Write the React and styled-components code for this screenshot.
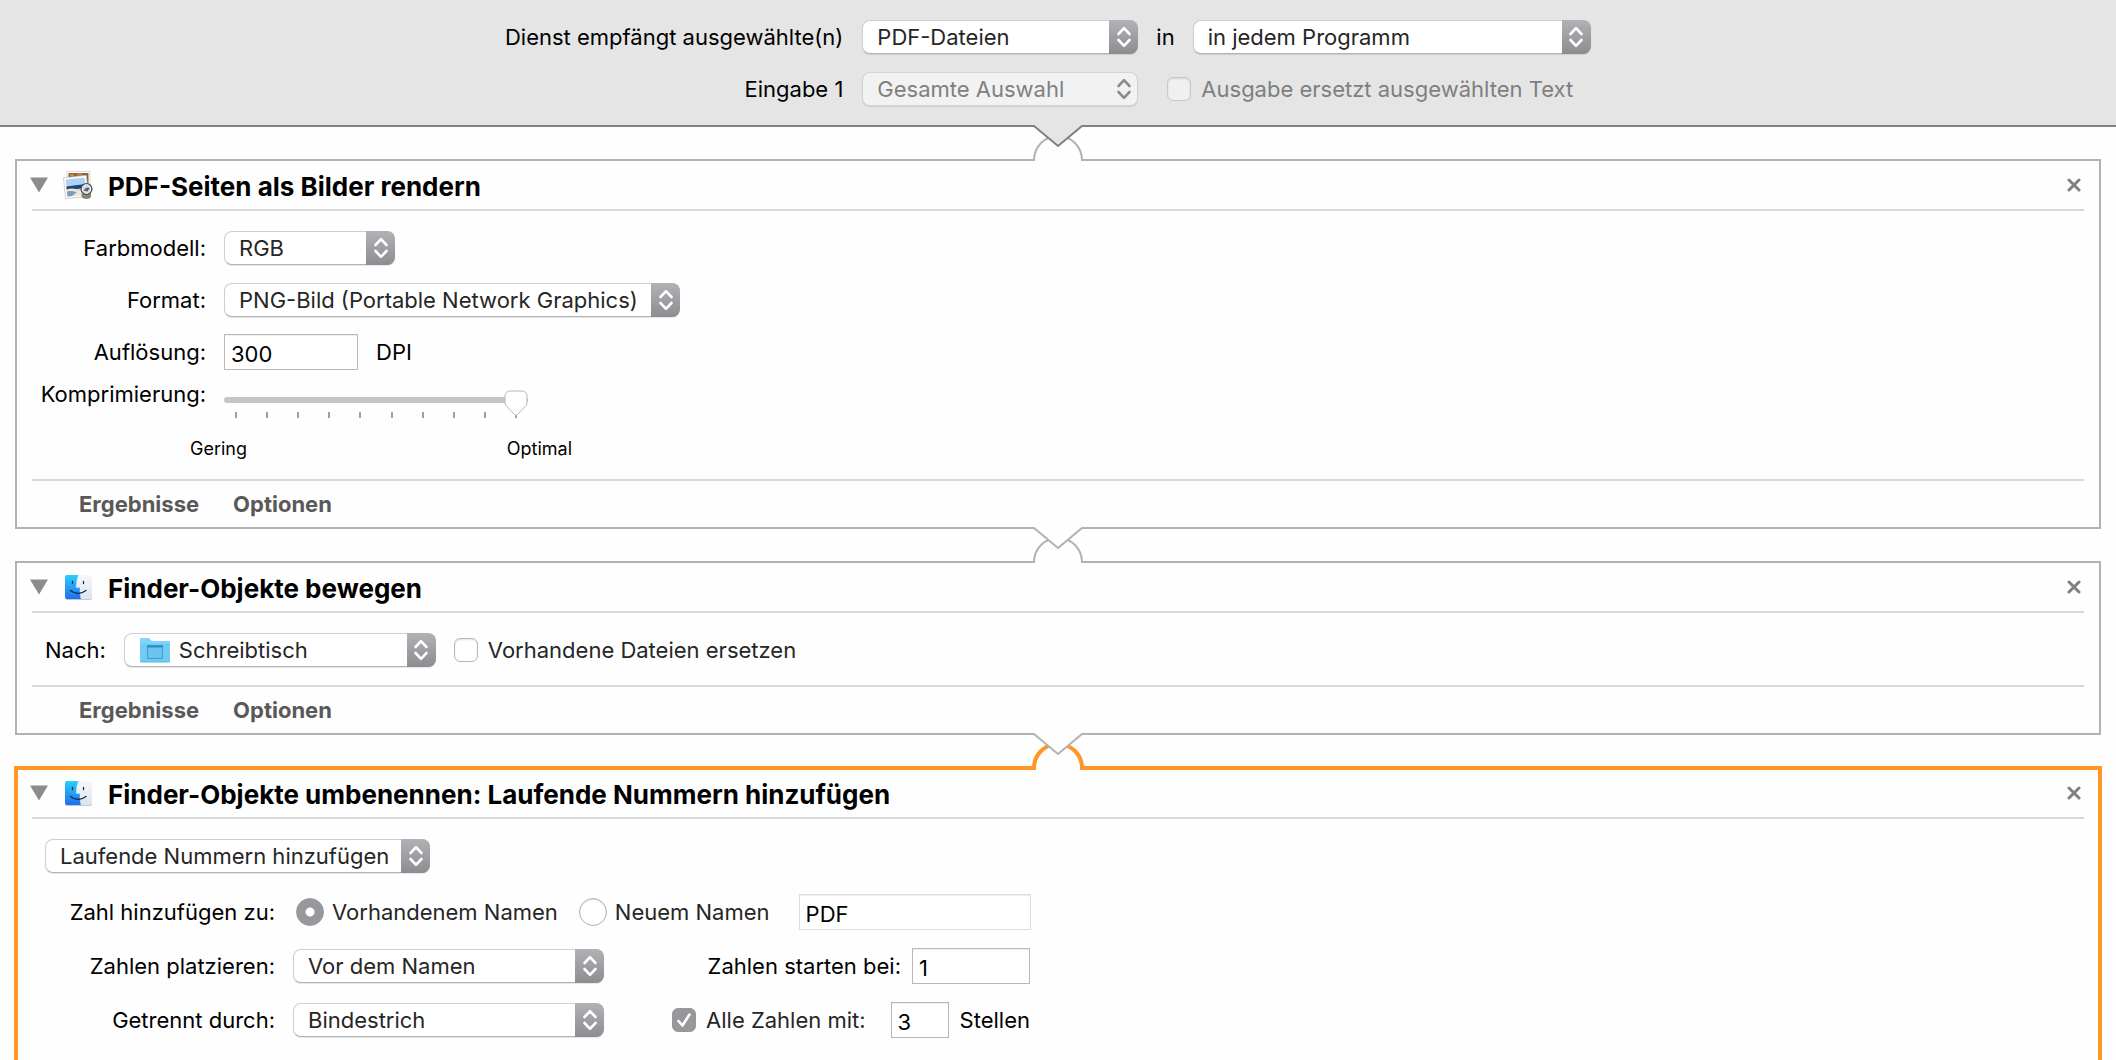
import React, { useId, useState } from "react";
import styled, { createGlobalStyle } from "styled-components";

const GlobalStyle = createGlobalStyle`
  *, *::before, *::after { box-sizing: border-box; }
  body {
    margin: 0;
    background: #fefefe;
    color: #000;
    font: 22px/26px Inter, "Liberation Sans", sans-serif;
  }
  button, input, select { font: inherit; color: inherit; margin: 0; }
`;

const Window = styled.div`
  display: flex;
  flex-direction: column;
  height: 100vh;
  overflow: hidden auto;
  scrollbar-width: none;
  > * { flex-shrink: 0; }
`;

const ServiceBar = styled.header`
  display: grid;
  grid-template-columns: 344px auto auto;
  justify-content: center;
  row-gap: 18px;
  padding: 20px 22px 19px 0;
  background: #e5e5e5;
  border-bottom: 2px solid #808080;
`;

const ServiceLabel = styled.label`
  align-self: center;
  text-align: right;
  padding-right: 4px;
`;

const ServiceCell = styled.div`
  display: flex;
  align-items: center;
  gap: 18px;
  padding-left: ${(p) => p.$indent}px;
`;

const PopupFrame = styled.div`
  display: grid;
  grid-template-columns: 1fr 29px;
  width: ${(p) => p.$width}px;
  height: 34px;
  flex-shrink: 0;
`;

const PopupSelect = styled.select`
  grid-area: 1 / 1 / 2 / 3;
  appearance: none;
  width: 100%;
  height: 34px;
  padding: 0 32px 0 ${(p) => (p.$icon ? 54 : 14)}px;
  border: 1px solid #cfcfcf;
  border-bottom-color: #b2b2b2;
  border-radius: 8px;
  background: #fff;
  color: #262626;
  box-shadow: 0 1px 1px rgba(0, 0, 0, 0.1);
  &:disabled {
    background: #f2f2f2;
    border-color: #d2d2d2;
    color: #808080;
    opacity: 1;
  }
`;

const PopupArrows = styled.span`
  grid-area: 1 / 2;
  z-index: 1;
  display: grid;
  place-items: center;
  pointer-events: none;
  border-radius: 0 8px 8px 0;
  color: ${(p) => (p.$off ? "#8c8c8c" : "#fff")};
  background: ${(p) => (p.$off ? "none" : "linear-gradient(#b2b1b5, #8d8c91)")};
`;

const PopupIcon = styled.span`
  grid-area: 1 / 1;
  z-index: 1;
  align-self: center;
  display: flex;
  padding-left: 15px;
  pointer-events: none;
`;

const Action = styled.section`
  margin: 0 15px;
  background: #fefefe;
  border: 2px solid ${(p) => (p.$selected ? "#ff9628" : "#b2b2b2")};
  box-shadow: ${(p) => (p.$selected ? "0 0 0 1px #ff9628, inset 0 0 0 1px #ff9628" : "none")};
`;

const ActionHeader = styled.div`
  display: flex;
  align-items: center;
  height: 48px;
  padding: 0 18px 0 13px;
`;

const PlainButton = styled.button`
  display: flex;
  padding: 0;
  border: 0;
  background: none;
`;

const ActionIcon = styled.span`
  display: flex;
  padding: 0 15px;
`;

const ActionTitle = styled.h2`
  flex: 1;
  margin: 0;
  padding-top: 3px;
  font-size: 26px;
  line-height: 32px;
  font-weight: 700;
`;

const Divider = styled.hr`
  height: 2px;
  margin: 0 15px;
  border: 0;
  background: #d8d8d8;
`;

const ActionBody = styled.div`
  padding: 20px 0 ${(p) => p.$bottom}px;
`;

const ActionFooter = styled.div`
  display: flex;
  align-items: center;
  gap: 34px;
  height: 46px;
  padding-left: 62px;
`;

const FooterButton = styled(PlainButton)`
  color: #595959;
  font-weight: 700;
`;

const Rows = styled.div`
  display: flex;
  flex-direction: column;
  gap: ${(p) => p.$gap}px;
`;

const NumberRows = styled(Rows)`
  padding-top: 22px;
`;

const Row = styled.div`
  display: flex;
  align-items: center;
  gap: ${(p) => p.$gap || 18}px;
  height: 34px;
  padding-left: ${(p) => p.$indent || 0}px;
`;

const Field = styled.label`
  width: ${(p) => p.$width}px;
  flex-shrink: 0;
  text-align: right;
`;

const TextInput = styled.input`
  width: ${(p) => p.$width}px;
  height: 36px;
  flex-shrink: 0;
  padding: 3px 6px 0;
  border: 1px solid ${(p) => (p.$soft ? "#dcdcdc" : "#b8b8b8")};
  border-radius: 0;
  background: #fff;
  box-shadow: inset 0 1px 0 #f0f0f0;
  outline: 0;
`;

const NameInput = styled(TextInput)`
  margin-left: 8px;
`;

const Choice = styled.label`
  display: flex;
  align-items: center;
  gap: ${(p) => p.$gap || 10}px;
  color: ${(p) => (p.$off ? "#7f7f7f" : "#262626")};
`;

const CheckFrame = styled.span`
  display: grid;
  width: 24px;
  height: 24px;
  > * { grid-area: 1 / 1; }
  > svg { z-index: 1; pointer-events: none; }
`;

const CheckInput = styled.input`
  appearance: none;
  width: 24px;
  height: 24px;
  border: 1px solid #b8b8b8;
  border-radius: 6px;
  background: #fff;
  box-shadow: inset 0 1px 2px rgba(0, 0, 0, 0.12);
  &:checked { background: #98979c; border-color: #98979c; box-shadow: none; }
  &:disabled { background: #f0f0f0; border-color: #c8c8c8; }
`;

const RadioInput = styled.input`
  appearance: none;
  width: 28px;
  height: 28px;
  border: 1px solid #b0b0b0;
  border-radius: 50%;
  background: #fff;
  box-shadow: inset 0 1px 2px rgba(0, 0, 0, 0.12);
  &:checked {
    border-color: #98979c;
    background: radial-gradient(circle, #fff 0 4px, #98979c 5px);
    box-shadow: none;
  }
`;

const SliderRow = styled.div`
  display: flex;
  align-items: flex-start;
  gap: 18px;
  padding-top: 12px;
`;

const SliderBox = styled.div`
  width: 304px;
  padding-top: 7px;
`;

const thumb = encodeURIComponent(
  '<svg xmlns="http://www.w3.org/2000/svg" width="24" height="26"><path d="M1 6a5 5 0 0 1 5-5h12a5 5 0 0 1 5 5v6q0 2-1 3.500L13.500 24.500q-1.500 1.500-3 0L2 15.500q-1-1.500-1-3.500z" fill="#fff" stroke="#b8b8b8"/></svg>'
);

const Slider = styled.input`
  appearance: none;
  position: relative;
  z-index: 1;
  display: block;
  width: 100%;
  height: 24px;
  background: none;
  &::-webkit-slider-runnable-track {
    height: 6px;
    border-radius: 3px;
    background: #c6c6c6;
  }
  &::-webkit-slider-thumb {
    appearance: none;
    width: 24px;
    height: 26px;
    margin-top: -7px;
    background: url("data:image/svg+xml,${thumb}") no-repeat;
  }
`;

const Ticks = styled.div`
  display: flex;
  justify-content: space-between;
  margin: 0 11px;
`;

const Tick = styled.span`
  width: 2px;
  height: 6px;
  background: #a0a0a0;
`;

const ScaleCaptions = styled.div`
  display: flex;
  justify-content: space-between;
  width: 382px;
  margin: 20px 0 0 173px;
  font-size: 18px;
  line-height: 22px;
`;

const RightPart = styled.div`
  display: flex;
  align-items: center;
  justify-content: flex-end;
  gap: 11px;
  width: 408px;
`;

const DigitsCaption = styled.span`
  padding-right: 14px;
`;

const ConnectorSvg = styled.svg`
  position: relative;
  z-index: 2;
  display: block;
  margin: -3px auto;
`;

function Connector({ fill = "#fefefe", line = "#b2b2b2", selected }) {
  return (
    <ConnectorSvg width="64" height="38" viewBox="0 0 64 38" fill="none" aria-hidden="true">
      <path
        d={selected ? "M8 38V36A24 24 0 0 1 56 36V38" : "M8 37V36A24 24 0 0 1 56 36V37"}
        fill="#fefefe"
        stroke={selected ? "#ff9628" : "#b2b2b2"}
        strokeWidth={selected ? 4 : 2}
      />
      <path d="M8 1V2L32 22L56 2V1Z" fill={fill} />
      <path d="M7 2H8L32 22L56 2H57" stroke={line} strokeWidth="2" />
    </ConnectorSvg>
  );
}

function Popup({ id, width, value, disabled, icon, label }) {
  return (
    <PopupFrame $width={width}>
      <PopupSelect id={id} disabled={disabled} $icon={!!icon} aria-label={label} defaultValue={value}>
        <option>{value}</option>
      </PopupSelect>
      {icon && <PopupIcon>{icon}</PopupIcon>}
      <PopupArrows $off={disabled}>
        <svg width="16" height="24" viewBox="0 0 16 24" fill="none" stroke="currentColor" strokeWidth="2.6" strokeLinecap="round" strokeLinejoin="round">
          <path d="M2.500 9L8 3.200L13.500 9M2.500 15L8 20.800L13.500 15" />
        </svg>
      </PopupArrows>
    </PopupFrame>
  );
}

function Checkbox({ children, checked, disabled, gap }) {
  const [on, setOn] = useState(!!checked);
  return (
    <Choice $off={disabled} $gap={gap}>
      <CheckFrame>
        <CheckInput type="checkbox" checked={on} disabled={disabled} onChange={(e) => setOn(e.target.checked)} />
        {on && (
          <svg width="24" height="24" viewBox="0 0 24 24" fill="none" stroke="#fff" strokeWidth="2.6" strokeLinecap="round" strokeLinejoin="round">
            <path d="M6.500 13L10.500 17.500L17.500 6.500" />
          </svg>
        )}
      </CheckFrame>
      {children}
    </Choice>
  );
}

function FinderIcon() {
  const id = useId();
  return (
    <svg width="30" height="30" viewBox="0 0 30 30" aria-hidden="true">
      <defs>
        <linearGradient id={id + "b"} x1="0" y1="0" x2="0" y2="1">
          <stop offset="0" stopColor="#2ad0fb" />
          <stop offset="1" stopColor="#1f6ff0" />
        </linearGradient>
        <linearGradient id={id + "w"} x1="0" y1="0" x2="0" y2="1">
          <stop offset="0" stopColor="#f6f6f8" />
          <stop offset="1" stopColor="#dbe6f1" />
        </linearGradient>
      </defs>
      <rect x="2" y="4" width="27" height="24" rx="2" fill="#c4c8cd" />
      <rect x="2" y="3" width="27" height="24" rx="2" fill={`url(#${id}w)`} />
      <path d="M4 3H15.500Q13.200 9 13.200 15.500H17Q16.600 21 18 27H4Q2 27 2 25V5Q2 3 4 3Z" fill={`url(#${id}b)`} />
      <path d="M15.500 3Q13.200 9 13.200 15.500H17Q16.600 21 18 27" fill="none" stroke="#fff" strokeWidth=".6" opacity=".6" />
      <path d="M9.500 9.500V11.500M20.500 9.500V11.500" stroke="#1b2c46" strokeWidth="1.300" strokeLinecap="round" />
      <path d="M7.500 18.500Q15 24.500 23 18.500" fill="none" stroke="#1b2c46" strokeWidth="1.300" strokeLinecap="round" />
    </svg>
  );
}

function PreviewIcon() {
  return (
    <svg width="30" height="30" viewBox="0 0 30 30" aria-hidden="true">
      <rect x="4" y="1.500" width="23" height="20" fill="#fff" stroke="#c4c4c4" strokeWidth=".6" />
      <rect x="5.500" y="3" width="20" height="12" fill="#8d6230" />
      <path d="M7 4h4v2H7zM14 3.500h5v2h-5z" fill="#b98a4c" />
      <g transform="rotate(-6 13 17)">
        <rect x="1.500" y="6.500" width="23" height="21" fill="#fff" stroke="#b4b4b4" strokeWidth=".6" />
        <rect x="3.500" y="8.500" width="19" height="17" fill="#b0d2f6" />
        <path d="M3.500 15.500L22.500 15V19H3.500Z" fill="#1d4577" />
        <path d="M3.500 18.500Q9 17 14 19.500T22.500 19.500V25.500H3.500Z" fill="#ece5d8" />
        <path d="M3.500 20.500Q9 20 13 22.500L8 25.500H3.500Z" fill="#7d9cbb" />
      </g>
      <path d="M18.500 23.500H28V27Q27 29 23.500 29T18.500 27Z" fill="#8b8378" />
      <circle cx="23.500" cy="19" r="5.400" fill="#cfdae6" stroke="#4c4a49" strokeWidth="1.300" />
      <circle cx="23.500" cy="19" r="4.200" fill="none" stroke="#f5f5f5" />
      <path d="M20.500 20.500Q23.500 16 26.500 18L24.500 21.500Z" fill="#55606c" />
    </svg>
  );
}

function FolderIcon() {
  return (
    <svg width="32" height="28" viewBox="0 0 32 28" aria-hidden="true">
      <path d="M1 3.500Q1 2 2.500 2H9.500L12.500 5H29.500Q31 5 31 6.500V25Q31 26.500 29.500 26.500H2.500Q1 26.500 1 25Z" fill="#58b7e6" />
      <path d="M1 3.500Q1 2 2.500 2H9.500L12.500 5H29.500Q31 5 31 6.500V8H1Z" fill="#7fd4f8" />
      <rect x="1" y="7.500" width="30" height="18" rx="1" fill="#70cbf5" />
      <rect x="8.500" y="9.500" width="15" height="13" fill="#6cc3ee" stroke="#3f9fd0" />
      <path d="M8 10.500H24" stroke="#2f8dbf" strokeWidth="2" />
    </svg>
  );
}

function ActionFrame({ title, icon, selected, children, footer }) {
  return (
    <Action $selected={selected}>
      <ActionHeader>
        <PlainButton aria-label="Einklappen">
          <svg width="18" height="16" viewBox="0 0 18 16"><path d="M0 .500H18L9 15.500Z" fill="#8c8c8c" /></svg>
        </PlainButton>
        <ActionIcon>{icon}</ActionIcon>
        <ActionTitle>{title}</ActionTitle>
        <PlainButton aria-label="Entfernen">
          <svg width="14" height="14" viewBox="0 0 14 14"><path d="M2 2L12 12M12 2L2 12" stroke="#808080" strokeWidth="3" strokeLinecap="round" /></svg>
        </PlainButton>
      </ActionHeader>
      <Divider />
      {children}
      {footer && (
        <>
          <Divider />
          <ActionFooter>
            <FooterButton>Ergebnisse</FooterButton>
            <FooterButton>Optionen</FooterButton>
          </ActionFooter>
        </>
      )}
    </Action>
  );
}

export default function App() {
  const [target, setTarget] = useState("existing");
  return (
    <>
      <GlobalStyle />
      <Window>
        <ServiceBar>
          <ServiceLabel htmlFor="receives">Dienst empfängt ausgewählte(n)</ServiceLabel>
          <ServiceCell $indent={15}>
            <Popup id="receives" width={276} value="PDF-Dateien" />
          </ServiceCell>
          <ServiceCell as="label" $indent={18}>
            in
            <Popup width={398} value="in jedem Programm" />
          </ServiceCell>
          <ServiceLabel htmlFor="input">Eingabe 1</ServiceLabel>
          <ServiceCell $indent={15}>
            <Popup id="input" width={276} value="Gesamte Auswahl" disabled />
          </ServiceCell>
          <ServiceCell $indent={29}>
            <Checkbox disabled>Ausgabe ersetzt ausgewählten Text</Checkbox>
          </ServiceCell>
        </ServiceBar>

        <Connector fill="#e5e5e5" line="#808080" />

        <ActionFrame title="PDF-Seiten als Bilder rendern" icon={<PreviewIcon />} footer>
          <ActionBody $bottom={19}>
            <Rows $gap={18}>
              <Row>
                <Field $width={189} htmlFor="model">Farbmodell:</Field>
                <Popup id="model" width={171} value="RGB" />
              </Row>
              <Row>
                <Field $width={189} htmlFor="format">Format:</Field>
                <Popup id="format" width={456} value="PNG-Bild (Portable Network Graphics)" />
              </Row>
              <Row>
                <Field $width={189} htmlFor="dpi">Auflösung:</Field>
                <TextInput id="dpi" $width={134} defaultValue="300" />
                <span>DPI</span>
              </Row>
            </Rows>
            <SliderRow>
              <Field $width={189} htmlFor="compression">Komprimierung:</Field>
              <SliderBox>
                <Slider id="compression" type="range" min="0" max="9" defaultValue="9" />
                <Ticks>
                  {Array.from({ length: 10 }, (_, i) => <Tick key={i} />)}
                </Ticks>
              </SliderBox>
            </SliderRow>
            <ScaleCaptions>
              <span>Gering</span>
              <span>Optimal</span>
            </ScaleCaptions>
          </ActionBody>
        </ActionFrame>

        <Connector />

        <ActionFrame title="Finder-Objekte bewegen" icon={<FinderIcon />} footer>
          <ActionBody $bottom={18}>
            <Row $indent={28}>
              <label htmlFor="destination">Nach:</label>
              <Popup id="destination" width={312} value="Schreibtisch" icon={<FolderIcon />} />
              <Checkbox>Vorhandene Dateien ersetzen</Checkbox>
            </Row>
          </ActionBody>
        </ActionFrame>

        <Connector selected />

        <ActionFrame title="Finder-Objekte umbenennen: Laufende Nummern hinzufügen" icon={<FinderIcon />} selected>
          <ActionBody $bottom={24}>
            <Row $indent={28}>
              <Popup width={385} value="Laufende Nummern hinzufügen" label="Umbenennen" />
            </Row>
            <NumberRows $gap={20}>
              <Row $gap={21}>
                <Field as="span" $width={258}>Zahl hinzufügen zu:</Field>
                <Choice $gap={8}>
                  <RadioInput type="radio" name="target" checked={target === "existing"} onChange={() => setTarget("existing")} />
                  Vorhandenem Namen
                </Choice>
                <Choice $gap={8}>
                  <RadioInput type="radio" name="target" checked={target === "new"} onChange={() => setTarget("new")} />
                  Neuem Namen
                </Choice>
                <NameInput $width={232} $soft defaultValue="PDF" aria-label="Neuer Name" />
              </Row>
              <Row>
                <Field $width={258} htmlFor="place">Zahlen platzieren:</Field>
                <Popup id="place" width={311} value="Vor dem Namen" />
                <RightPart>
                  <label htmlFor="start">Zahlen starten bei:</label>
                  <TextInput id="start" $width={118} defaultValue="1" />
                </RightPart>
              </Row>
              <Row>
                <Field $width={258} htmlFor="separator">Getrennt durch:</Field>
                <Popup id="separator" width={311} value="Bindestrich" />
                <RightPart>
                  <Checkbox checked><DigitsCaption>Alle Zahlen mit:</DigitsCaption></Checkbox>
                  <TextInput id="digits" $width={58} defaultValue="3" />
                  <label htmlFor="digits">Stellen</label>
                </RightPart>
              </Row>
            </NumberRows>
          </ActionBody>
        </ActionFrame>
      </Window>
    </>
  );
}
